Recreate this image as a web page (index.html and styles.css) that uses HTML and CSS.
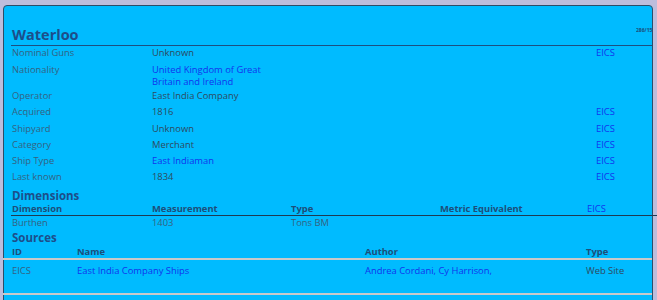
FILE: index.html
```html
<!DOCTYPE html>
<html>
<head>
<meta charset="utf-8">
<link rel="stylesheet" href="styles.css">
</head>
<body>
<div class="card">
  <div class="head">
    <h1 class="title">Waterloo</h1>
    <span class="stamp">286/15</span>
  </div>
  <table class="info">
    <colgroup><col class="c-label"><col class="c-value"><col class="c-fill"><col class="c-src"></colgroup>
    <tr><td class="lbl">Nominal Guns</td><td class="val">Unknown</td><td></td><td><a class="lnk">EICS</a></td></tr>
    <tr class="two"><td class="lbl">Nationality</td><td><a class="lnk">United Kingdom of Great Britain and Ireland</a></td><td></td><td></td></tr>
    <tr><td class="lbl">Operator</td><td class="val">East India Company</td><td></td><td></td></tr>
    <tr><td class="lbl">Acquired</td><td class="val">1816</td><td></td><td><a class="lnk">EICS</a></td></tr>
    <tr><td class="lbl">Shipyard</td><td class="val">Unknown</td><td></td><td><a class="lnk">EICS</a></td></tr>
    <tr><td class="lbl">Category</td><td class="val">Merchant</td><td></td><td><a class="lnk">EICS</a></td></tr>
    <tr><td class="lbl">Ship Type</td><td><a class="lnk">East Indiaman</a></td><td></td><td><a class="lnk">EICS</a></td></tr>
    <tr><td class="lbl">Last known</td><td class="val">1834</td><td></td><td><a class="lnk">EICS</a></td></tr>
  </table>
  <h2 class="section sec-dim">Dimensions</h2>
  <table class="dims">
    <colgroup><col class="d1"><col class="d2"><col class="d3"><col class="d4"><col></colgroup>
    <tr class="thead"><th>Dimension</th><th>Measurement</th><th>Type</th><th>Metric Equivalent</th><th><a class="lnk norm">EICS</a></th></tr>
    <tr><td class="lbl">Burthen</td><td class="lbl">1403</td><td class="lbl">Tons BM</td><td></td><td></td></tr>
  </table>
  <h2 class="section">Sources</h2>
  <table class="srcs">
    <colgroup><col class="s1"><col class="s2"><col class="s3"><col></colgroup>
    <tr class="thead"><th>ID</th><th>Name</th><th>Author</th><th>Type</th></tr>
    <tr class="row"><td class="lbl">EICS</td><td><a class="lnk">East India Company Ships</a></td><td><a class="lnk">Andrea Cordani, Cy Harrison,</a></td><td class="val">Web Site</td></tr>
  </table>
</div>
</body>
</html>
```
FILE: styles.css
```css
html, body {
  margin: 0;
  padding: 0;
}
body {
  background: #bdbddc;
  padding: 5px 0 0 3px;
  font-family: "Open Sans", "DejaVu Sans", sans-serif;
  font-size: 9.4px;
  line-height: 12px;
  overflow: hidden;
  height: 300px;
  box-sizing: border-box;
}
.card {
  width: 650px;
  box-sizing: border-box;
  min-height: 320px;
  background: #00bbff;
  border: 1px solid #2e4d68;
  border-radius: 4px;
  padding-left: 7px;
}
.head {
  display: flex;
  justify-content: space-between;
  align-items: flex-end;
  height: 39px;
  border-bottom: 1px solid #1d4f80;
}
.title {
  margin: 0 0 0 1px;
  font-size: 14.5px;
  line-height: 20px;
  font-weight: 700;
  color: #1d4e8a;
}
.stamp {
  font-size: 5px;
  line-height: 6px;
  font-weight: 700;
  color: #1d4e7a;
  margin-bottom: 12px;
  white-space: nowrap;
  width: 16px;
  overflow: hidden;
}
table {
  border-collapse: collapse;
  table-layout: fixed;
}
td, th {
  padding: 0 0 0 1px;
  text-align: left;
  vertical-align: top;
}
.info {
  width: 640px;
}
.info td {
  padding-top: 1px;
  padding-bottom: 3.25px;
}
.info tr.two td {
  line-height: 12.5px;
  padding-top: 1.5px;
  padding-bottom: 0.25px;
}
.c-label { width: 140px; }
.c-value { width: 132px; }
.c-fill { width: 312px; }
.lbl { color: #35627f; }
.val { color: #2e4a60; }
.lnk {
  color: #1234ee;
  text-decoration: none;
}
.section {
  margin: 0 0 0 1px;
  font-size: 11.5px;
  line-height: 15px;
  font-weight: 700;
  color: #1d4e8a;
}
.sec-dim {
  margin-top: 1.25px;
}
.thead th {
  font-weight: 700;
  color: #1d4e7a;
  font-size: 9.4px;
}
.thead .norm { font-weight: 400; }
.dims {
  width: 646px;
}
.dims .thead {
  border-bottom: 1px solid #1e3a52;
}
.dims .thead th {
  line-height: 12px;
  padding-top: 0;
}
.dims td { padding-top: 1px; padding-bottom: 1px; }
.d1 { width: 140px; }
.d2 { width: 139px; }
.d3 { width: 149px; }
.d4 { width: 147px; }
.srcs {
  width: 649px;
  margin-left: -8px;
}
.srcs th:first-child, .srcs td:first-child { padding-left: 9px; }
.srcs .thead th { padding-top: 1px; }
.srcs tr.row {
  border-top: 2px solid #c9c9c9;
  border-bottom: 2px solid #c9c9c9;
}
.srcs .row td {
  padding-top: 5px;
  padding-bottom: 16.5px;
}
.s1 { width: 73px; }
.s2 { width: 288px; }
.s3 { width: 221px; }
```
